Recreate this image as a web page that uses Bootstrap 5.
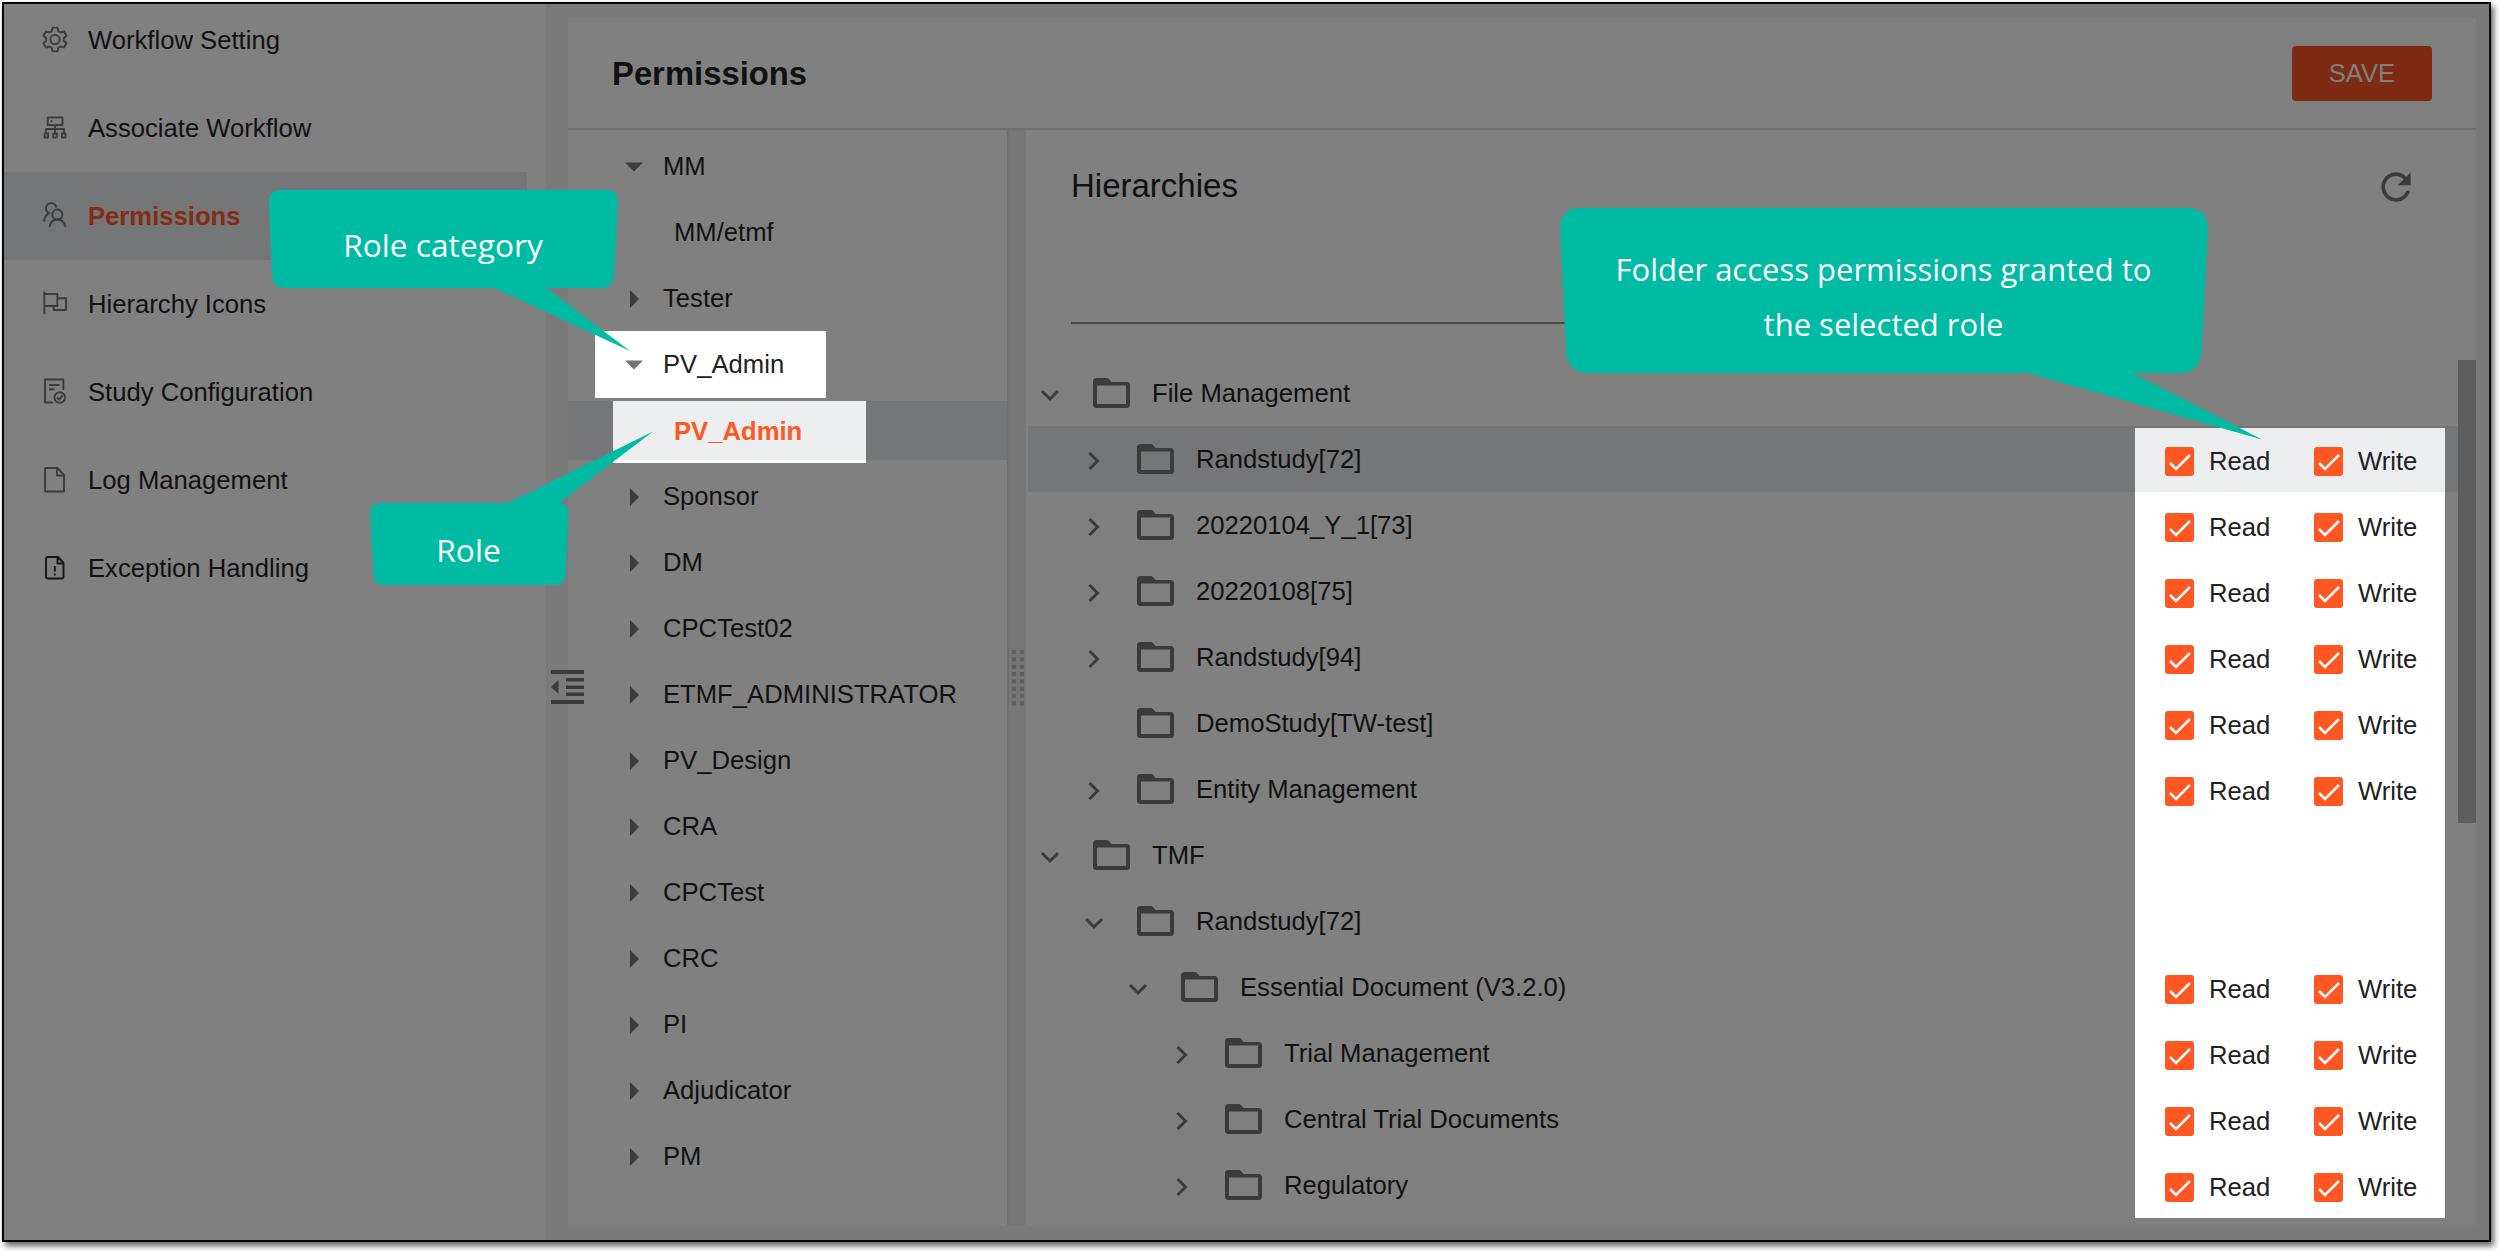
<!DOCTYPE html>
<html lang="en">
<head>
<meta charset="utf-8">
<title>Permissions</title>
<link href="https://cdn.jsdelivr.net/npm/bootstrap@5.3.0/dist/css/bootstrap.min.css" rel="stylesheet">
<style>
:root{--base:#808080;--gutter:#7b7b7b;--sel:#757678;--ink:#111;--icon:#3b3b3b;--rule:#707070;--accent:#ff5722;--teal:#00bba4}
html,body{height:100%}
body{background:#fff;margin:0;overflow:hidden;font-family:"Liberation Sans",Arial,sans-serif;font-size:25.65px;line-height:1;color:var(--ink)}
.screen{width:2489px;height:1240px;margin:2px 0 0 2px;border:2px solid #060606;background:var(--gutter);box-shadow:3px 4px 6px rgba(0,0,0,.6)}
.side{width:542px;background:var(--base)}
.side-item{height:88px;width:523px;padding-left:38px;gap:20px;color:var(--ink)}
.side-item span{padding-top:2px}
.side-item svg{width:26px;height:28px;fill:none;stroke:#3c3c3c;stroke-width:1.9;stroke-linejoin:round}
.side-item.current{background:var(--sel);color:#842c14;font-weight:700}
.side-list{margin-top:-8px}
.panel{margin:14px 13px 15px 22px;background:var(--base);min-width:0}
.panel-head{height:112px;border-bottom:2px solid var(--rule);padding:0 44px 0 44px}
.panel-head h1{font-size:32.8px;font-weight:700;margin:0;padding-top:2px}
.btn-save{width:140px;height:55px;background:#7f2a13;color:#808080;border:0;border-radius:4px;font-size:25.6px;padding:2px 0 0;line-height:1}
.roles{width:441px;border-right:2px solid var(--rule);padding-top:4px}
.role{height:66px;padding-left:57px}
.role .tri{width:18px;margin-right:20px;fill:var(--icon)}
.role.kid{padding-left:106px}
.role.lit{height:67px;margin:-1px 181px 0 27px;padding-left:30px;padding-top:1px;background:#fff;color:#212121}
.role.lit .tri{fill:#757575}
.kid-row{height:66px;padding-top:3px}
.kid-band{height:59px;background:var(--sel);padding-left:45px}
.kid-lit{width:253px;height:62px;background:linear-gradient(#eceef0 59px,#fff 59px);color:var(--accent);font-weight:700;padding:17.5px 0 0 61px}
.splitter{width:17px;background:#777}
.dots{width:12px;height:56px;fill:#606060;display:block}
.hier-head{height:230px;padding:36px 62px 0 45px}
.hier-head h2{font-size:33px;font-weight:400;margin:0}
.reload{margin:-1px -22px -10px 0}
.search-line{height:2px;background:#484848;margin-top:116px;width:600px}
.tree-row{height:66px;margin-left:2px;padding-top:1px}
.tree-row.current{background:var(--sel)}
.tree-row .chev{width:22px;height:22px;fill:none;stroke:var(--icon);stroke-width:3;margin-top:3px}
.tree-row .folder{width:37px;height:30px;margin:-1px 22px 0 32px}
.lv0{padding-left:11px}.lv1{padding-left:55px}.lv2{padding-left:99px}.lv3{padding-left:143px}
.perms{width:310px;flex:none;height:66px;margin-top:-1px;margin-right:13px;background:#fff;color:#212121;padding:5px 0 0 30px}
.current .perms{background:#eceef0;height:64px;margin-top:1px;padding-top:3px}
.perm{width:149px;flex:none;gap:15px}
.tick{width:29px;height:29px}
.scroll-col{width:18px;padding-top:230px}
.thumb{height:463px;background:#5e5e5e}
.callouts{left:0;top:0;width:2500px;height:1251px;pointer-events:none}
.tip{position:absolute;color:#fff;font-family:"Open Sans","Noto Sans",sans-serif;font-size:31px;text-align:center;line-height:55px;white-space:nowrap}
.tip-a{left:269px;top:217px;width:348px;font-size:31.7px}
.tip-b{left:369px;top:522px;width:199px;font-size:31.7px}
.tip-c{left:1560px;top:242px;width:647px}
.collapse-ico{position:absolute;left:551px;top:670px;width:33px;height:34px;fill:var(--icon)}
</style>
</head>
<body>
<svg class="d-none">
  <symbol id="folder" viewBox="0 0 37 30"><path fill="#3b3b3b" fill-rule="evenodd" d="M3.500 0H14q1 0 2 1l2.500 3H33.500q3.500 0 3.500 3.500v19q0 3.500-3.500 3.500h-30Q0 30 0 26.500v-23Q0 0 3.500 0zM4 7.500v18.500h29V7.500z"/></symbol>
  <symbol id="down" viewBox="0 0 22 22"><path d="M3 7l8 8 8-8"/></symbol>
  <symbol id="right" viewBox="0 0 22 22"><path d="M6.500 3l8 8-8 8"/></symbol>
  <symbol id="tdown" viewBox="0 0 18 18"><path d="M0 4.500h18l-9 9z"/></symbol>
  <symbol id="tright" viewBox="0 0 18 18"><path d="M5 0v18l9-9z"/></symbol>
  <symbol id="tick" viewBox="0 0 29 29"><rect width="29" height="29" rx="3" fill="#ff5722"/><path d="M5 16l6 6L25 8" fill="none" stroke="#fff" stroke-width="2.500"/></symbol>
</svg>
<div class="screen d-flex">
  <nav class="side flex-shrink-0 overflow-hidden"><div class="side-list">
    <div class="side-item d-flex align-items-center"><svg viewBox="0 0 26 28"><path d="M10.500 1.600H15.500L16.300 5.200 18.500 6.500 22 5.400 24.500 9.700 21.800 12.200V14.800L24.500 17.300 22 21.600 18.500 20.500 16.300 21.800 15.500 25.400H10.500L9.700 21.800 7.500 20.500 4 21.600 1.500 17.300 4.200 14.800V12.200L1.500 9.700 4 5.400 7.500 6.500 9.700 5.200Z"/><circle cx="13" cy="13.500" r="4.600"/></svg><span>Workflow Setting</span></div>
    <div class="side-item d-flex align-items-center"><svg viewBox="0 0 26 28"><path d="M5.700 3.500h14.800v7.500H5.700zM8.500 7.200h2M13 11v8M4 19v-4h18v4M2.500 19.500h3.600v4H2.500zM11.200 19.500h3.600v4h-3.600zM19.900 19.500h3.600v4h-3.600z"/></svg><span>Associate Workflow</span></div>
    <div class="side-item current d-flex align-items-center"><svg viewBox="0 0 26 28"><circle cx="15.300" cy="12.500" r="5"/><path d="M7.500 25q1-7.500 7.800-7.500T23.500 25M14.300 5.500A5.200 5.200 0 1 0 7.300 11.200Q2.500 13.500 2 19.700"/></svg><span>Permissions</span></div>
    <div class="side-item d-flex align-items-center"><svg viewBox="0 0 26 28"><path d="M2.300 1.700v22.600M2.300 4h13v12h-13M15.300 8.300H24v11.700H11.700v-4"/></svg><span>Hierarchy Icons</span></div>
    <div class="side-item d-flex align-items-center"><svg viewBox="0 0 26 28"><path d="M11 24.500H3v-23h18.300V12M7 7h10.500M7 11.300h5.500"/><circle cx="17.700" cy="19.500" r="5.300"/><path d="M15 19.500l2 2 3.500-4"/></svg><span>Study Configuration</span></div>
    <div class="side-item d-flex align-items-center"><svg viewBox="0 0 26 28"><path d="M3 2h12.500l6.500 7v16.500H3zM15 2v7.500h7"/></svg><span>Log Management</span></div>
    <div class="side-item d-flex align-items-center"><svg viewBox="0 0 26 28"><path stroke="#151515" d="M6 3h10l5.500 6v13.500q0 2-2 2H6q-2 0-2-2V5q0-2 2-2zM15.500 3v6.500h6M12.800 12v5.500M12.800 19.500v2"/></svg><span>Exception Handling</span></div>
  </div></nav>
  <main class="panel flex-grow-1 d-flex flex-column">
    <header class="panel-head d-flex align-items-center justify-content-between flex-shrink-0"><h1>Permissions</h1><button class="btn btn-save">SAVE</button></header>
    <div class="d-flex flex-grow-1">
      <div class="roles flex-shrink-0">
        <div class="role d-flex align-items-center"><svg class="tri" height="18"><use href="#tdown"/></svg>MM</div>
        <div class="role kid d-flex align-items-center">MM/etmf</div>
        <div class="role d-flex align-items-center"><svg class="tri" height="18"><use href="#tright"/></svg>Tester</div>
        <div class="role lit d-flex align-items-center"><svg class="tri" height="18"><use href="#tdown"/></svg>PV_Admin</div>
        <div class="kid-row"><div class="kid-band"><div class="kid-lit">PV_Admin</div></div></div>
        <div class="role d-flex align-items-center"><svg class="tri" height="18"><use href="#tright"/></svg>Sponsor</div>
        <div class="role d-flex align-items-center"><svg class="tri" height="18"><use href="#tright"/></svg>DM</div>
        <div class="role d-flex align-items-center"><svg class="tri" height="18"><use href="#tright"/></svg>CPCTest02</div>
        <div class="role d-flex align-items-center"><svg class="tri" height="18"><use href="#tright"/></svg>ETMF_ADMINISTRATOR</div>
        <div class="role d-flex align-items-center"><svg class="tri" height="18"><use href="#tright"/></svg>PV_Design</div>
        <div class="role d-flex align-items-center"><svg class="tri" height="18"><use href="#tright"/></svg>CRA</div>
        <div class="role d-flex align-items-center"><svg class="tri" height="18"><use href="#tright"/></svg>CPCTest</div>
        <div class="role d-flex align-items-center"><svg class="tri" height="18"><use href="#tright"/></svg>CRC</div>
        <div class="role d-flex align-items-center"><svg class="tri" height="18"><use href="#tright"/></svg>PI</div>
        <div class="role d-flex align-items-center"><svg class="tri" height="18"><use href="#tright"/></svg>Adjudicator</div>
        <div class="role d-flex align-items-center"><svg class="tri" height="18"><use href="#tright"/></svg>PM</div>
      </div>
      <div class="splitter d-flex align-items-center justify-content-center flex-shrink-0"><svg class="dots" viewBox="0 0 12 56"><path d="M0 0h4v4H0zM8 0h4v4H8zM0 7.400h4v4H0zM8 7.400h4v4H8zM0 14.700h4v4H0zM8 14.700h4v4H8zM0 22h4v4H0zM8 22h4v4H8zM0 29.400h4v4H0zM8 29.400h4v4H8zM0 36.700h4v4H0zM8 36.700h4v4H8zM0 44h4v4H0zM8 44h4v4H8zM0 51.400h4v4H0zM8 51.400h4v4H8z"/></svg></div>
      <section class="flex-grow-1">
        <div class="hier-head"><div class="d-flex justify-content-between"><h2>Hierarchies</h2><svg class="reload" width="44" height="44" viewBox="0 0 24 24" fill="#3b3b3b"><path d="M17.650 6.350C16.200 4.900 14.210 4 12 4c-4.420 0-7.990 3.580-7.990 8s3.570 8 7.990 8c3.730 0 6.840-2.550 7.730-6h-2.080c-.82 2.330-3.040 4-5.650 4-3.310 0-6-2.690-6-6s2.690-6 6-6c1.660 0 3.140.69 4.220 1.780L13 11h7V4l-2.350 2.350z"/></svg></div><div class="search-line"></div></div>
        <div class="tree-row lv0 d-flex align-items-center"><svg class="chev"><use href="#down"/></svg><svg class="folder"><use href="#folder"/></svg>File Management</div>
        <div class="tree-row current lv1 d-flex align-items-center"><svg class="chev"><use href="#right"/></svg><svg class="folder"><use href="#folder"/></svg>Randstudy[72]<div class="perms ms-auto d-flex align-items-center"><span class="perm d-flex align-items-center"><svg class="tick"><use href="#tick"/></svg>Read</span><span class="perm d-flex align-items-center"><svg class="tick"><use href="#tick"/></svg>Write</span></div></div>
        <div class="tree-row lv1 d-flex align-items-center"><svg class="chev"><use href="#right"/></svg><svg class="folder"><use href="#folder"/></svg>20220104_Y_1[73]<div class="perms ms-auto d-flex align-items-center"><span class="perm d-flex align-items-center"><svg class="tick"><use href="#tick"/></svg>Read</span><span class="perm d-flex align-items-center"><svg class="tick"><use href="#tick"/></svg>Write</span></div></div>
        <div class="tree-row lv1 d-flex align-items-center"><svg class="chev"><use href="#right"/></svg><svg class="folder"><use href="#folder"/></svg>20220108[75]<div class="perms ms-auto d-flex align-items-center"><span class="perm d-flex align-items-center"><svg class="tick"><use href="#tick"/></svg>Read</span><span class="perm d-flex align-items-center"><svg class="tick"><use href="#tick"/></svg>Write</span></div></div>
        <div class="tree-row lv1 d-flex align-items-center"><svg class="chev"><use href="#right"/></svg><svg class="folder"><use href="#folder"/></svg>Randstudy[94]<div class="perms ms-auto d-flex align-items-center"><span class="perm d-flex align-items-center"><svg class="tick"><use href="#tick"/></svg>Read</span><span class="perm d-flex align-items-center"><svg class="tick"><use href="#tick"/></svg>Write</span></div></div>
        <div class="tree-row lv1 d-flex align-items-center"><svg class="chev"></svg><svg class="folder"><use href="#folder"/></svg>DemoStudy[TW-test]<div class="perms ms-auto d-flex align-items-center"><span class="perm d-flex align-items-center"><svg class="tick"><use href="#tick"/></svg>Read</span><span class="perm d-flex align-items-center"><svg class="tick"><use href="#tick"/></svg>Write</span></div></div>
        <div class="tree-row lv1 d-flex align-items-center"><svg class="chev"><use href="#right"/></svg><svg class="folder"><use href="#folder"/></svg>Entity Management<div class="perms ms-auto d-flex align-items-center"><span class="perm d-flex align-items-center"><svg class="tick"><use href="#tick"/></svg>Read</span><span class="perm d-flex align-items-center"><svg class="tick"><use href="#tick"/></svg>Write</span></div></div>
        <div class="tree-row lv0 d-flex align-items-center"><svg class="chev"><use href="#down"/></svg><svg class="folder"><use href="#folder"/></svg>TMF<div class="perms ms-auto"></div></div>
        <div class="tree-row lv1 d-flex align-items-center"><svg class="chev"><use href="#down"/></svg><svg class="folder"><use href="#folder"/></svg>Randstudy[72]<div class="perms ms-auto"></div></div>
        <div class="tree-row lv2 d-flex align-items-center"><svg class="chev"><use href="#down"/></svg><svg class="folder"><use href="#folder"/></svg>Essential Document (V3.2.0)<div class="perms ms-auto d-flex align-items-center"><span class="perm d-flex align-items-center"><svg class="tick"><use href="#tick"/></svg>Read</span><span class="perm d-flex align-items-center"><svg class="tick"><use href="#tick"/></svg>Write</span></div></div>
        <div class="tree-row lv3 d-flex align-items-center"><svg class="chev"><use href="#right"/></svg><svg class="folder"><use href="#folder"/></svg>Trial Management<div class="perms ms-auto d-flex align-items-center"><span class="perm d-flex align-items-center"><svg class="tick"><use href="#tick"/></svg>Read</span><span class="perm d-flex align-items-center"><svg class="tick"><use href="#tick"/></svg>Write</span></div></div>
        <div class="tree-row lv3 d-flex align-items-center"><svg class="chev"><use href="#right"/></svg><svg class="folder"><use href="#folder"/></svg>Central Trial Documents<div class="perms ms-auto d-flex align-items-center"><span class="perm d-flex align-items-center"><svg class="tick"><use href="#tick"/></svg>Read</span><span class="perm d-flex align-items-center"><svg class="tick"><use href="#tick"/></svg>Write</span></div></div>
        <div class="tree-row lv3 d-flex align-items-center"><svg class="chev"><use href="#right"/></svg><svg class="folder"><use href="#folder"/></svg>Regulatory<div class="perms ms-auto d-flex align-items-center"><span class="perm d-flex align-items-center"><svg class="tick"><use href="#tick"/></svg>Read</span><span class="perm d-flex align-items-center"><svg class="tick"><use href="#tick"/></svg>Write</span></div></div>
      </section>
      <div class="scroll-col flex-shrink-0"><div class="thumb"></div></div>
    </div>
  </main>
</div>
<svg class="collapse-ico" viewBox="0 0 33 34"><path d="M0 0h33v4H0zM15 8h18v3.500H15zM15 15.500h18V19H15zM15 22.500h18V26H15zM0 30h33v4H0zM7.500 10v14L0 17z"/></svg>
<div class="callouts position-absolute">
  <svg width="2500" height="1251" fill="#00bba4">
    <path d="M281 190H606q12 0 12 12L614 276q-1 12-12 12H546.500L630 351 494.500 288H284q-11 0-12-12L269 202q0-12 12-12z"/>
    <path d="M380 503H508L653 431.500 559 503q9 0 9.500 10L565.500 575q-1 10-10 10H383q-9 0-9.500-10L370 513q0-10 10-10z"/>
    <path d="M1580 208H2187q21 0 21 22L2201.500 350q-1 23-22 23H2132.500L2262 439.500 2028 373H1588q-21 0-22-23L1560 230q0-22 20-22z"/>
  </svg>
  <div class="tip tip-a">Role category</div>
  <div class="tip tip-b">Role</div>
  <div class="tip tip-c">Folder access permissions granted to<br>the selected role</div>
</div>
<script src="https://cdn.jsdelivr.net/npm/bootstrap@5.3.0/dist/js/bootstrap.bundle.min.js"></script>
</body>
</html>
